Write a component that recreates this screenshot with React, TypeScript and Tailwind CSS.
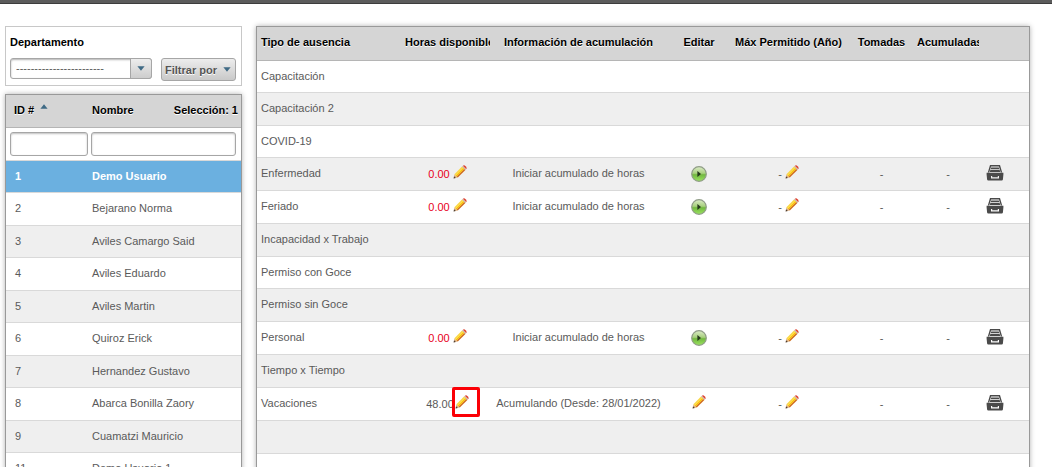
import { useState } from "react";
import clsx from "clsx";

interface Employee {
  id: number;
  name: string;
}

interface Absence {
  type: string;
  hours?: string;
  info?: string;
  editable?: boolean;
  highlighted?: boolean;
}

const employees: Employee[] = [
  { id: 1, name: "Demo Usuario" },
  { id: 2, name: "Bejarano Norma" },
  { id: 3, name: "Aviles Camargo Said" },
  { id: 4, name: "Aviles Eduardo" },
  { id: 5, name: "Aviles Martin" },
  { id: 6, name: "Quiroz Erick" },
  { id: 7, name: "Hernandez Gustavo" },
  { id: 8, name: "Abarca Bonilla Zaory" },
  { id: 9, name: "Cuamatzi Mauricio" },
  { id: 11, name: "Demo Usuario 1" },
];

const absences: Absence[] = [
  { type: "Capacitación" },
  { type: "Capacitación 2" },
  { type: "COVID-19" },
  { type: "Enfermedad", hours: "0.00", info: "Iniciar acumulado de horas" },
  { type: "Feriado", hours: "0.00", info: "Iniciar acumulado de horas" },
  { type: "Incapacidad x Trabajo" },
  { type: "Permiso con Goce" },
  { type: "Permiso sin Goce" },
  { type: "Personal", hours: "0.00", info: "Iniciar acumulado de horas" },
  { type: "Tiempo x Tiempo" },
  {
    type: "Vacaciones",
    hours: "48.00",
    info: "Acumulando (Desde: 28/01/2022)",
    editable: true,
    highlighted: true,
  },
  { type: "" },
  { type: "" },
];

function PencilIcon() {
  return (
    <svg width="14" height="14" viewBox="0 0 14 14" className="block">
      <path d="M0.8 13.2 L1.4 9.2 L4.8 12.6 Z" fill="#dfb184" />
      <path d="M0.6 13.4 L1 11.2 L2.8 13 Z" fill="#4a3b30" />
      <path d="M1.4 9.2 L9 1.6 L10.2 2.8 L2.6 10.4 Z" fill="#f9d84a" />
      <path d="M2.6 10.4 L10.2 2.8 L11.3 3.9 L3.7 11.5 Z" fill="#ffc800" />
      <path d="M3.7 11.5 L11.3 3.9 L12.4 5 L4.8 12.6 Z" fill="#cf6c1c" />
      <path d="M9 1.6 L9.9 0.7 L13.3 4.1 L12.4 5 Z" fill="#cdb4a6" />
      <path d="M9.9 0.7 Q11.2 -0.2 12.6 1.2 Q14.2 2.8 13.3 4.1 Z" fill="#df3d2c" />
    </svg>
  );
}

function PlayIcon() {
  return (
    <svg width="16" height="16" viewBox="0 0 16 16" className="block">
      <defs>
        <linearGradient id="play-fill" x1="0" y1="0" x2="0" y2="1">
          <stop offset="0" stopColor="#dcebc8" />
          <stop offset="0.45" stopColor="#a8d07e" />
          <stop offset="0.55" stopColor="#72b840" />
          <stop offset="1" stopColor="#9be460" />
        </linearGradient>
      </defs>
      <circle cx="8" cy="8" r="7.3" fill="url(#play-fill)" stroke="#8f9c86" strokeWidth="1.2" />
      <path d="M6.4 5 L10 8 L6.4 11 Z" fill="#26381c" />
    </svg>
  );
}

function DrawerIcon() {
  return (
    <svg width="18" height="16" viewBox="0 0 18 16" className="block" fill="#4a4a4a">
      <path d="M4 0 H14 L16.2 7.4 H14.8 L12.9 1.6 H5.1 L3.2 7.4 H1.8 Z" />
      <path d="M5.2 2.4 H12.8 L13.2 4 H4.8 Z M4.4 4.8 H13.6 L14.2 7 H3.8 Z" />
      <path
        fillRule="evenodd"
        d="M0.6 7.8 H17.4 V9.6 L16.9 14.6 Q16.8 15.6 15.7 15.6 H2.3 Q1.2 15.6 1.1 14.6 L0.6 9.6 Z M5 11 V13.4 H13 V11 H11.8 V12.2 H6.2 V11 Z"
      />
    </svg>
  );
}

function Caret({ up = false }: { up?: boolean }) {
  return (
    <svg
      width="8"
      height="5"
      viewBox="0 0 8 5"
      className={clsx("block", up && "rotate-180")}
      fill="#3f6a85"
    >
      <path d="M0.4 0.3 H7.6 L4 4.7 Z" />
    </svg>
  );
}

function EditButton({ label, highlighted = false }: { label: string; highlighted?: boolean }) {
  return (
    <button type="button" aria-label={label} className="relative block cursor-pointer">
      <PencilIcon />
      {highlighted && (
        <span className="pointer-events-none absolute -top-2 -left-[3px] h-[30px] w-7 rounded-xs border-3 border-[#fb0006]" />
      )}
    </button>
  );
}

const panel = "border border-[#999] bg-white shadow-[0_0_5px_rgba(0,0,0,0.3)]";
const headCell =
  "overflow-hidden whitespace-nowrap border-b border-[#b5b5b5] bg-[#d5d5d5] p-0 pb-[3px] font-bold text-black [text-shadow:0_1px_0_#fff]";
const bodyCell = "border-b border-[#d9d9d9] p-0";
const textCell = "border-b border-[#d9d9d9] p-0 pb-0.5";
const textInput =
  "h-6 min-w-0 rounded-[3px] border border-[#a6a6a6] bg-white px-1 shadow-[inset_0_1px_2px_rgba(0,0,0,0.25)] outline-none";

function DepartmentFilter() {
  return (
    <div className="flex h-[60px] flex-col gap-2 border border-[#c8c8c8] pt-[7px] pl-1">
      <label htmlFor="department" className="leading-4 font-bold text-black">
        Departamento
      </label>
      <div className="flex items-start gap-[9px]">
        <div className="relative">
          <select
            id="department"
            className="h-[21px] w-[142px] appearance-none rounded-[3px] border border-[#a6a6a6] bg-white pr-6 pb-0.5 pl-[5px] shadow-[inset_0_1px_2px_rgba(0,0,0,0.3)] outline-none"
          >
            <option>------------------------</option>
          </select>
          <span className="pointer-events-none absolute inset-y-0 right-0 flex w-[22px] items-center justify-center rounded-r-[3px] border border-[#a6a6a6] bg-linear-to-b from-[#ededed] to-[#cdcdcd]">
            <Caret />
          </span>
        </div>
        <button
          type="button"
          className="flex h-[23px] w-[75px] items-center gap-1.5 rounded-[3px] border border-[#a6a6a6] bg-linear-to-b from-[#ededed] to-[#c9c9c9] pl-[3px] font-bold text-[#555] [text-shadow:0_1px_0_#fff]"
        >
          Filtrar por
          <Caret />
        </button>
      </div>
    </div>
  );
}

function EmployeeTable() {
  const [selected, setSelected] = useState(1);

  return (
    <div className={panel}>
      <table className="w-full table-fixed border-separate border-spacing-0 text-left">
        <colgroup>
          <col className="w-[83px]" />
          <col />
          <col className="w-[72px]" />
        </colgroup>
        <thead>
          <tr className="h-[33px]">
            <th className={clsx(headCell, "pl-2")}>
              <span className="flex items-center gap-1.5">
                ID #
                <span className="pb-1.5">
                  <Caret up />
                </span>
              </span>
            </th>
            <th className={clsx(headCell, "pl-[3px]")}>Nombre</th>
            <th className={clsx(headCell, "pr-[3px] text-right")}>Selección: 1</th>
          </tr>
          <tr className="h-[33px]">
            <td colSpan={3} className={bodyCell}>
              <div className="flex gap-[3px] pr-[5px] pl-1">
                <input aria-label="ID #" className={clsx(textInput, "w-[78px]")} />
                <input aria-label="Nombre" className={clsx(textInput, "flex-1")} />
              </div>
            </td>
          </tr>
        </thead>
        <tbody>
          {employees.map((employee) => (
            <tr
              key={employee.id}
              onClick={() => setSelected(employee.id)}
              className={clsx(
                "h-8 cursor-pointer even:h-[33px]",
                employee.id === selected
                  ? "bg-[#6bb0e0] font-bold text-white"
                  : "odd:bg-[#efefef]"
              )}
            >
              <td className={clsx(textCell, "pl-[9px]")}>{employee.id}</td>
              <td colSpan={2} className={clsx(textCell, "pl-[3px]")}>
                {employee.name}
              </td>
            </tr>
          ))}
        </tbody>
      </table>
    </div>
  );
}

function AbsenceRow({ absence }: { absence: Absence }) {
  const { type, hours, info, editable, highlighted } = absence;

  if (!hours) {
    return (
      <tr className="h-8 even:h-[33px] even:bg-[#efefef]">
        <td colSpan={9} className={clsx(textCell, "pl-1 text-left")}>
          {type}
        </td>
      </tr>
    );
  }

  return (
    <tr className="h-[33px] even:bg-[#efefef]">
      <td className={clsx(textCell, "pl-1 text-left")}>{type}</td>
      <td className={bodyCell}>
        <div
          className={clsx(
            "flex items-center justify-center",
            hours === "0.00" ? "gap-[3px] text-[#e8001c]" : "gap-px"
          )}
        >
          <span>{hours}</span>
          <span className="pb-1">
            <EditButton label={`Editar horas de ${type}`} highlighted={highlighted} />
          </span>
        </div>
      </td>
      <td className={textCell}>{info}</td>
      <td className={bodyCell}>
        <div className="flex justify-center">
          {editable ? (
            <span className="pb-1">
              <EditButton label={`Editar ${type}`} />
            </span>
          ) : (
            <button type="button" aria-label={`Iniciar ${type}`} className="cursor-pointer">
              <PlayIcon />
            </button>
          )}
        </div>
      </td>
      <td className={bodyCell}>
        <div className="flex items-center justify-center gap-[3px]">
          <span>-</span>
          <span className="pb-1">
            <EditButton label={`Editar máximo de ${type}`} />
          </span>
        </div>
      </td>
      <td className={bodyCell}>-</td>
      <td className={bodyCell}>-</td>
      <td className={textCell}>
        <div className="flex justify-center">
          <button type="button" aria-label={`Historial de ${type}`} className="cursor-pointer">
            <DrawerIcon />
          </button>
        </div>
      </td>
      <td className={bodyCell} />
    </tr>
  );
}

function AbsenceTable() {
  return (
    <div className={clsx(panel, "min-w-0 flex-1")}>
      <table className="w-full table-fixed border-separate border-spacing-0 text-center">
        <colgroup>
          <col />
          <col className="w-[85px]" />
          <col className="w-[177px]" />
          <col className="w-16" />
          <col className="w-[115px]" />
          <col className="w-[71px]" />
          <col className="w-[62px]" />
          <col className="w-8" />
          <col className="w-[18px]" />
        </colgroup>
        <thead>
          <tr className="h-[34px]">
            <th className={clsx(headCell, "pl-1 text-left")}>Tipo de ausencia</th>
            <th className={clsx(headCell, "text-left")}>Horas disponibles</th>
            <th className={headCell}>Información de acumulación</th>
            <th className={headCell}>Editar</th>
            <th className={headCell}>Máx Permitido (Año)</th>
            <th className={headCell}>Tomadas</th>
            <th className={clsx(headCell, "text-left")}>Acumuladas</th>
            <td className={headCell} />
            <td className={headCell} />
          </tr>
        </thead>
        <tbody>
          {absences.map((absence, index) => (
            <AbsenceRow key={index} absence={absence} />
          ))}
        </tbody>
      </table>
    </div>
  );
}

export default function App() {
  return (
    <div className="h-screen overflow-hidden bg-white font-['Liberation_Sans',Arial,sans-serif] text-[11px] leading-4 text-[#5a5a5a]">
      <header className="h-1 border-b border-[#3c3c3c] bg-[#5b5b5b]" />
      <main className="flex items-start gap-3.5 pt-[22px] pr-[22px] pl-[5px]">
        <aside className="flex w-[237px] shrink-0 flex-col gap-2">
          <DepartmentFilter />
          <EmployeeTable />
        </aside>
        <AbsenceTable />
      </main>
    </div>
  );
}
